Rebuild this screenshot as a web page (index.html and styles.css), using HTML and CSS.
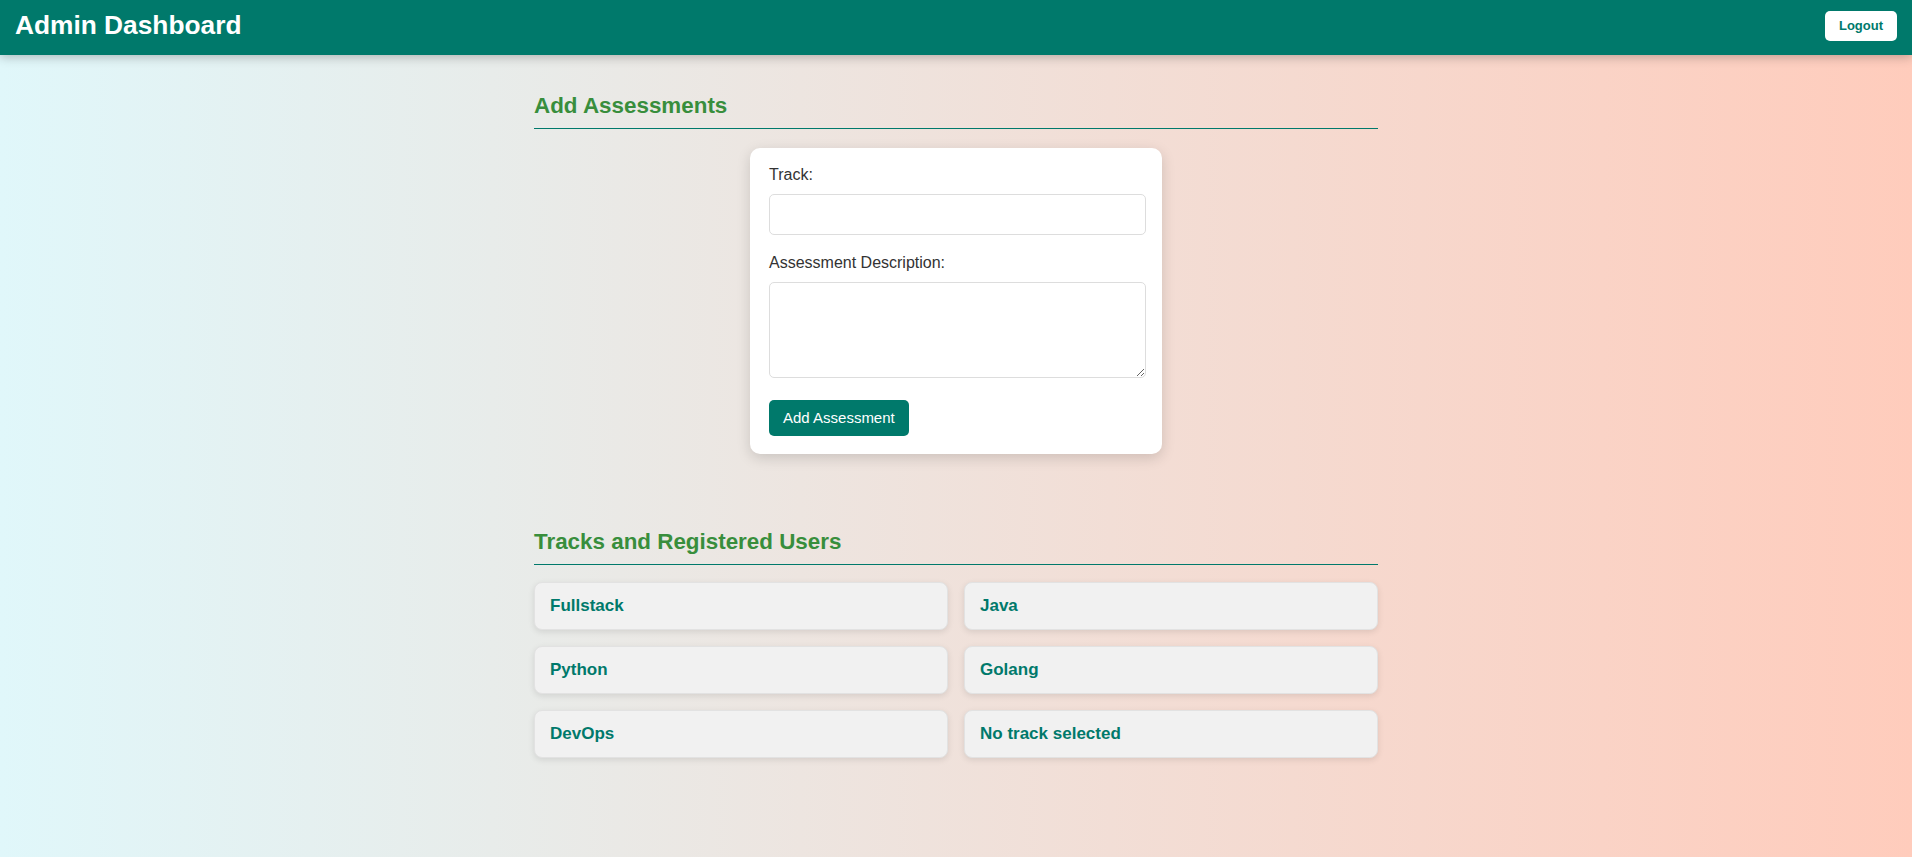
FILE: index.html
```html
<!DOCTYPE html>
<html lang="en">
<head>
<meta charset="utf-8">
<title>Admin Dashboard</title>
<link rel="stylesheet" href="styles.css">
</head>
<body>
<header class="topbar">
  <h1 class="brand">Admin Dashboard</h1>
  <button class="logout" type="button">Logout</button>
</header>
<main class="container">
  <section class="add-section">
    <h2 class="section-title">Add Assessments</h2>
    <form class="assess-form">
      <label class="field-label" for="track">Track:</label>
      <input class="field-input" id="track" type="text">
      <label class="field-label" for="desc">Assessment Description:</label>
      <textarea class="field-textarea" id="desc"></textarea>
      <button class="submit-btn" type="button">Add Assessment</button>
    </form>
  </section>
  <section class="tracks-section">
    <h2 class="section-title">Tracks and Registered Users</h2>
    <div class="track-grid">
      <div class="track-card"><h3 class="track-name">Fullstack</h3></div>
      <div class="track-card"><h3 class="track-name">Java</h3></div>
      <div class="track-card"><h3 class="track-name">Python</h3></div>
      <div class="track-card"><h3 class="track-name">Golang</h3></div>
      <div class="track-card"><h3 class="track-name">DevOps</h3></div>
      <div class="track-card"><h3 class="track-name">No track selected</h3></div>
    </div>
  </section>
</main>
</body>
</html>
```
FILE: styles.css
```css
* {
  box-sizing: border-box;
}

html, body {
  margin: 0;
  padding: 0;
}

body {
  font-family: "Liberation Sans", Arial, sans-serif;
  background: linear-gradient(to right, #e0f7fa, #ffccbc);
  min-height: 100vh;
  color: #333;
}

.topbar {
  display: flex;
  justify-content: space-between;
  align-items: flex-start;
  height: 55px;
  padding: 10px 15px 15px;
  background: #00796b;
  box-shadow: 0 2px 10px rgba(0, 0, 0, 0.25);
  position: relative;
  z-index: 1;
}

.brand {
  margin: 0;
  font-size: 26.3px;
  line-height: 30px;
  font-weight: bold;
  color: #ffffff;
}

.logout {
  margin-top: 1px;
  background: #ffffff;
  color: #00796b;
  border: none;
  border-radius: 5px;
  padding: 7px 14px;
  font-family: "Liberation Sans", Arial, sans-serif;
  font-size: 13px;
  line-height: 16px;
  font-weight: bold;
  cursor: pointer;
}

.container {
  width: 844px;
  margin: 0 auto;
  padding-top: 38px;
}

.section-title {
  margin: 0;
  font-size: 22.4px;
  line-height: 25px;
  font-weight: bold;
  color: #388e3c;
  padding-bottom: 10px;
  border-bottom: 1px solid #00796b;
}

.assess-form {
  width: 412px;
  margin: 19px auto 0;
  padding: 18px 16px 18px 19px;
  background: #ffffff;
  border-radius: 10px;
  box-shadow: 0 4px 14px rgba(0, 0, 0, 0.15);
}

.field-label {
  display: block;
  font-size: 16px;
  line-height: 18px;
  color: #333;
  margin-bottom: 10px;
}

.field-input {
  display: block;
  width: 100%;
  height: 41px;
  margin: 0 0 19px;
  padding: 10px;
  border: 1px solid #dddddd;
  border-radius: 5px;
  font-family: "Liberation Sans", Arial, sans-serif;
  font-size: 16px;
  background: #ffffff;
}

.field-textarea {
  display: block;
  width: 100%;
  height: 96px;
  margin: 0 0 22px;
  padding: 10px;
  border: 1px solid #dddddd;
  border-radius: 5px;
  font-family: "Liberation Sans", Arial, sans-serif;
  font-size: 16px;
  background: #ffffff;
}

.submit-btn {
  display: block;
  background: #00796b;
  color: #ffffff;
  border: none;
  border-radius: 5px;
  padding: 9px 14px;
  font-family: "Liberation Sans", Arial, sans-serif;
  font-size: 15px;
  line-height: 18px;
  cursor: pointer;
}

.tracks-section {
  margin-top: 75px;
  padding-bottom: 40px;
}

.track-grid {
  display: grid;
  grid-template-columns: 1fr 1fr;
  gap: 16px;
  margin-top: 17px;
}

.track-card {
  background: #f1f1f1;
  border: 1px solid #e2e2e2;
  border-radius: 8px;
  padding: 13px 15px;
  box-shadow: 0 2px 6px rgba(0, 0, 0, 0.1);
}

.track-name {
  margin: 0;
  font-size: 17px;
  line-height: 20px;
  font-weight: bold;
  color: #00796b;
}
```
